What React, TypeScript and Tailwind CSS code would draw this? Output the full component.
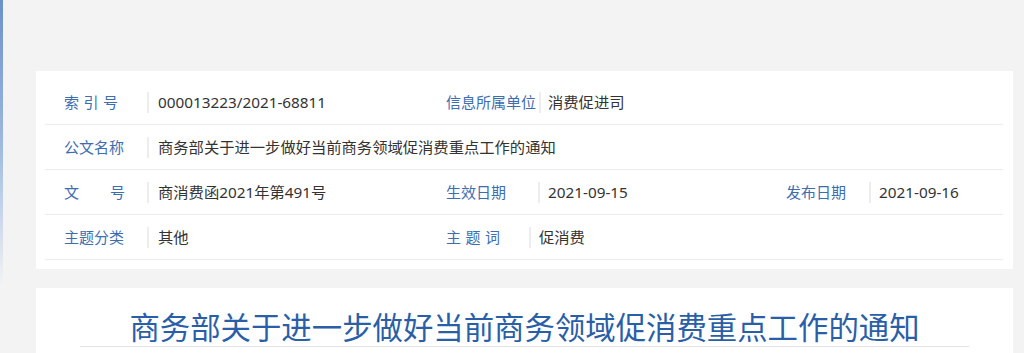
const rowLine = 'flex h-[45px] items-center border-b border-[#ececec]';
const value = 'text-[15.3px] text-[#333]';
const label = 'text-[15px] text-[#3d6db0]';

function Sep() {
  return <span className="h-[21px] w-[2px] shrink-0 bg-[#ededed]" />;
}

export default function App() {
  return (
    <div className="relative min-h-[353px] bg-[#f3f3f3] pt-[71px] font-['Noto_Sans','Noto_Sans_CJK_SC',sans-serif]">
      <div className="absolute left-0 top-0 h-[285px] w-[3px] bg-gradient-to-b from-[#6b91cb] via-[#9db8e0] to-transparent" />

      <section className="ml-[36px] w-[977px] bg-white pb-[9px] pl-[9px] pr-[10px] pt-[9px]">
        <div className={rowLine}>
          <div className="flex w-[382px] items-center">
            <span className={`w-[102px] shrink-0 pl-[19px] tracking-[0.3em] ${label}`}>索引号</span>
            <Sep />
            <span className={`pl-[9px] ${value}`}>000013223/2021-68811</span>
          </div>
          <div className="flex items-center">
            <span className={`w-[112px] shrink-0 pl-[19px] ${label}`}>信息所属单位</span>
            <Sep />
            <span className={`pl-[7px] ${value}`}>消费促进司</span>
          </div>
        </div>

        <div className={rowLine}>
          <div className="flex items-center">
            <span className={`w-[102px] shrink-0 pl-[19px] ${label}`}>公文名称</span>
            <Sep />
            <span className={`pl-[9px] ${value}`}>商务部关于进一步做好当前商务领域促消费重点工作的通知</span>
          </div>
        </div>

        <div className={rowLine}>
          <div className="flex w-[382px] items-center">
            <span className={`flex w-[102px] shrink-0 justify-between pl-[19px] pr-[22px] ${label}`}>
              <span>文</span>
              <span>号</span>
            </span>
            <Sep />
            <span className={`pl-[9px] ${value}`}>商消费函2021年第491号</span>
          </div>
          <div className="flex w-[340px] items-center">
            <span className={`w-[111px] shrink-0 pl-[19px] ${label}`}>生效日期</span>
            <Sep />
            <span className={`pl-[8px] ${value}`}>2021-09-15</span>
          </div>
          <div className="flex items-center">
            <span className={`w-[102px] shrink-0 pl-[19px] ${label}`}>发布日期</span>
            <Sep />
            <span className={`pl-[8px] ${value}`}>2021-09-16</span>
          </div>
        </div>

        <div className={rowLine}>
          <div className="flex w-[382px] items-center">
            <span className={`w-[102px] shrink-0 pl-[19px] ${label}`}>主题分类</span>
            <Sep />
            <span className={`pl-[9px] ${value}`}>其他</span>
          </div>
          <div className="flex items-center">
            <span className={`w-[102px] shrink-0 pl-[19px] tracking-[0.3em] ${label}`}>主题词</span>
            <Sep />
            <span className={`pl-[8px] ${value}`}>促消费</span>
          </div>
        </div>
      </section>

      <section className="ml-[36px] mt-[19px] w-[977px] bg-white px-[44px] pb-[40px] pt-[22px]">
        <h1 className="border-b border-[#e3e3e3] text-center text-[30.4px] leading-[36px] text-[#2a5fa8]">
          商务部关于进一步做好当前商务领域促消费重点工作的通知
        </h1>
      </section>
    </div>
  );
}
